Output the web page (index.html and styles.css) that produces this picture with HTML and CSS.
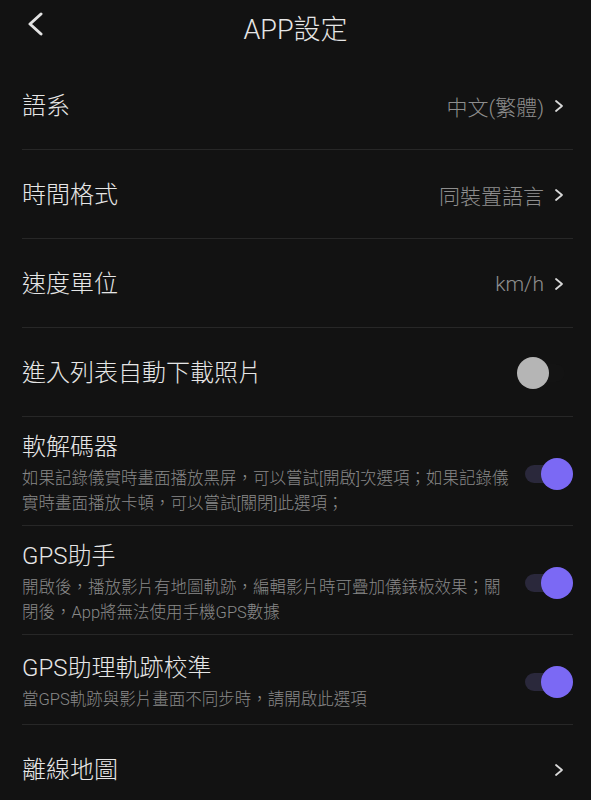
FILE: index.html
```html
<!DOCTYPE html>
<html lang="zh-Hant">
<head>
    <meta charset="UTF-8">
    <meta name="viewport" content="width=device-width, initial-scale=1.0">
    <title>APP設定</title>
    <link rel="stylesheet" href="styles.css">
</head>
<body>
    <header class="topbar">
        <a class="back" href="#">
            <svg width="16" height="24" viewBox="0 0 16 24"><polyline points="14,2 3,12 14,22" fill="none" stroke="#e2e2e2" stroke-width="3" stroke-linecap="round" stroke-linejoin="round"/></svg>
        </a>
        <h1>APP設定</h1>
    </header>

    <ul class="settings">
        <li class="row">
            <span class="label">語系</span>
            <span class="value">中文(繁體)</span>
            <svg class="arrow" width="10" height="14" viewBox="0 0 10 14"><polyline points="2,2 8,7 2,12" fill="none" stroke="#d8d8d8" stroke-width="1.8" stroke-linecap="round" stroke-linejoin="round"/></svg>
        </li>
        <li class="row">
            <span class="label">時間格式</span>
            <span class="value">同裝置語言</span>
            <svg class="arrow" width="10" height="14" viewBox="0 0 10 14"><polyline points="2,2 8,7 2,12" fill="none" stroke="#d8d8d8" stroke-width="1.8" stroke-linecap="round" stroke-linejoin="round"/></svg>
        </li>
        <li class="row">
            <span class="label">速度單位</span>
            <span class="value">km/h</span>
            <svg class="arrow" width="10" height="14" viewBox="0 0 10 14"><polyline points="2,2 8,7 2,12" fill="none" stroke="#d8d8d8" stroke-width="1.8" stroke-linecap="round" stroke-linejoin="round"/></svg>
        </li>
        <li class="row">
            <span class="label">進入列表自動下載照片</span>
            <span class="switch"><span class="knob"></span></span>
        </li>
        <li class="row detail">
            <div class="text">
                <div class="label">軟解碼器</div>
                <div class="desc">如果記錄儀實時畫面播放黑屏，可以嘗試[開啟]次選項；如果記錄儀<br>實時畫面播放卡頓，可以嘗試[關閉]此選項；</div>
            </div>
            <span class="switch on"><span class="knob"></span></span>
        </li>
        <li class="row detail">
            <div class="text">
                <div class="label">GPS助手</div>
                <div class="desc">開啟後，播放影片有地圖軌跡，編輯影片時可疊加儀錶板效果；關<br>閉後，App將無法使用手機GPS數據</div>
            </div>
            <span class="switch on"><span class="knob"></span></span>
        </li>
        <li class="row detail">
            <div class="text">
                <div class="label">GPS助理軌跡校準</div>
                <div class="desc">當GPS軌跡與影片畫面不同步時，請開啟此選項</div>
            </div>
            <span class="switch on"><span class="knob"></span></span>
        </li>
        <li class="row">
            <span class="label">離線地圖</span>
            <svg class="arrow" width="10" height="14" viewBox="0 0 10 14"><polyline points="2,2 8,7 2,12" fill="none" stroke="#d8d8d8" stroke-width="1.8" stroke-linecap="round" stroke-linejoin="round"/></svg>
        </li>
    </ul>
</body>
</html>
```

FILE: styles.css
```css
body {
    margin: 0;
    background-color: #121212;
    color: #e6e6e6;
    font-family: Roboto, "Noto Sans CJK TC", sans-serif;
    font-weight: 300;
    overflow: hidden;
}
.topbar {
    position: relative;
    height: 60px;
    display: flex;
    align-items: center;
    justify-content: center;
    padding-bottom: 6px;
    box-sizing: border-box;
}
.back {
    position: absolute;
    left: 27px;
    top: 12px;
    display: flex;
}
.topbar h1 {
    margin: 0;
    font-size: 27px;
    font-weight: 300;
    color: #e6e6e6;
}
.settings {
    list-style: none;
    margin: 0;
    padding: 0 18px 0 22px;
}
.row {
    display: flex;
    align-items: center;
    height: 89px;
    padding-top: 2px;
    border-bottom: 1px solid #272727;
    box-sizing: border-box;
}
.settings .row:first-child {
    height: 90px;
}
.row .label {
    flex: 1;
    font-size: 24px;
    line-height: 32px;
    color: #e6e6e6;
}
.value {
    font-size: 21px;
    color: #8e8e8e;
    margin-right: 10px;
}
.arrow {
    margin-right: 9px;
}
.row.detail {
    height: auto;
    min-height: 90px;
    padding: 14px 0 9px;
}
.text {
    flex: 1;
}
.desc {
    margin-top: 3px;
    font-size: 16.5px;
    line-height: 25px;
    color: #898989;
    white-space: nowrap;
}
.switch {
    position: relative;
    width: 56px;
    height: 32px;
    flex-shrink: 0;
}
.switch::before {
    content: "";
    position: absolute;
    left: 8px;
    right: 8px;
    top: 7px;
    height: 18px;
    border-radius: 9px;
    background-color: #131313;
}
.switch .knob {
    position: absolute;
    left: 0;
    top: 0;
    width: 32px;
    height: 32px;
    border-radius: 50%;
    background-color: #b5b5b5;
}
.switch.on::before {
    background-color: #2a283b;
}
.switch.on .knob {
    left: auto;
    right: 0;
    background-color: #7b69f4;
}
```
